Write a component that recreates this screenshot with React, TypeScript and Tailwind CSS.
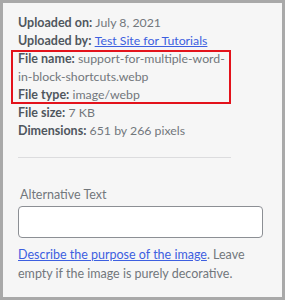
import React from "react";

const font = { fontFamily: 'Lato, "Noto Sans", sans-serif' };

function Row({ label, children }: { label: string; children: React.ReactNode }) {
  return (
    <div className="leading-[18px] h-[18px] whitespace-nowrap">
      <span className="font-bold text-[12.5px] text-[#50575e]">{label}</span>{" "}
      <span className="text-[12.3px] text-[#72777c]">{children}</span>
    </div>
  );
}

export default function App() {
  return (
    <div
      className="w-[285px] h-[300px] border-[3px] border-[#a9a9a9] bg-[#f6f6f6] overflow-hidden text-[12.5px]"
      style={font}
    >
      <div className="pl-[15px] pt-[11px]">
        <div className="w-[213px]">
          <Row label="Uploaded on:">July 8, 2021</Row>
          <Row label="Uploaded by:">
            <a className="text-[#3d5fe0] underline">Test Site for Tutorials</a>
          </Row>
          <div className="relative">
            <Row label="File name:">support-for-multiple-word-</Row>
            <div className="leading-[18px] h-[18px] text-[12.3px] text-[#72777c]">in-block-shortcuts.webp</div>
            <Row label="File type:">image/webp</Row>
            <div className="absolute -left-[7px] top-0 bottom-0 w-[220px] border-2 border-[#e3121b] pointer-events-none" />
          </div>
          <Row label="File size:">7 KB</Row>
          <Row label="Dimensions:">651 by 266 pixels</Row>
          <div className="mt-[17px] h-px bg-[#dcdcde]" />
        </div>
        <div className="mt-[28px] ml-[2px] leading-[18px] text-[#72777c]">Alternative Text</div>
        <div className="mt-[2px] w-[245px] h-[32px] border border-[#8c8f94] rounded-[4px] bg-white" />
        <div className="mt-[7px] leading-[19px] text-[#72777c] whitespace-nowrap">
          <a className="text-[#3d5fe0] underline">Describe the purpose of the image</a>. Leave
          <br />
          empty if the image is purely decorative.
        </div>
      </div>
    </div>
  );
}
